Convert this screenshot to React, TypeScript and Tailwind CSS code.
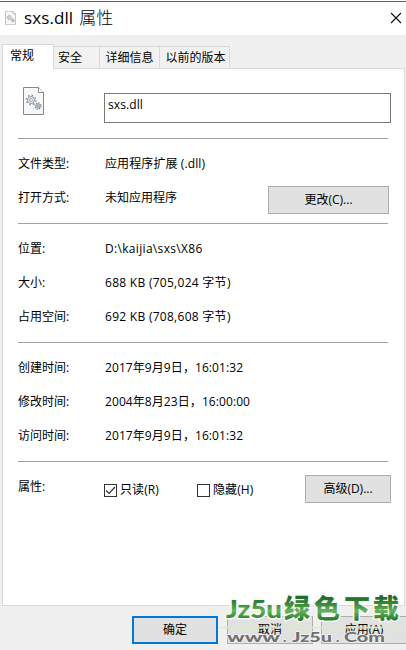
import type { ReactNode } from "react";

function GearPage({ className }: { className: string }) {
  return (
    <svg className={className} viewBox="0 0 21 28" fill="none">
      <path d="M.5.5h15l5 5v22H.5z" fill="#f8f8f8" stroke="#85898d" />
      <path d="M15.5.5v5h5" fill="#fff" stroke="#85898d" />
      <circle cx="8" cy="13" r="4.7" stroke="#929ba3" strokeWidth="1.5" strokeDasharray="1.7 1.99" />
      <circle cx="8" cy="13" r="3.5" fill="#e4e9ed" stroke="#8f9aa4" />
      <circle cx="8" cy="13" r="1.4" fill="#fff" stroke="#929ba3" strokeWidth=".8" />
      <circle cx="15" cy="19" r="3.1" stroke="#7f8992" strokeWidth="1.2" strokeDasharray="1.2 1.23" />
      <circle cx="15" cy="19" r="2.2" fill="#d5dce2" stroke="#7f8992" strokeWidth=".9" />
      <circle cx="15" cy="19" r=".8" fill="#77818a" />
    </svg>
  );
}

function Row({ label, children, spacing = "" }: { label: string; children: ReactNode; spacing?: string }) {
  return (
    <div className="flex h-[34px] items-center">
      <span className="w-[87px] shrink-0">{label}</span>
      <span className={spacing}>{children}</span>
    </div>
  );
}

function Check({ label, checked = false }: { label: string; checked?: boolean }) {
  return (
    <div className="flex items-center gap-[3px]">
      <span className="block size-[13px] border border-[#333] bg-white">
        {checked && (
          <svg viewBox="0 0 11 11" className="size-[11px]" fill="none">
            <path d="M1 5.5 4 8.5 10 2" stroke="#333" strokeWidth="1.2" />
          </svg>
        )}
      </span>
      <span className="tracking-[0.1px]">{label}</span>
    </div>
  );
}

const button = "flex items-center justify-center border border-[#adadad] bg-[#e1e1e1]";
const tab = "flex h-[22px] items-center justify-center border border-b-0 border-l-0 border-[#d9d9d9] bg-[#f2f2f2] pt-px";

export default function App() {
  return (
    <div className="relative flex h-[650px] w-[406px] flex-col overflow-hidden bg-[#f0f0f0] font-['Open_Sans','Noto_Sans_CJK_SC',sans-serif] text-[12px] leading-4 whitespace-nowrap text-black">
      <header className="flex h-[35px] items-center bg-white pl-[5px]">
        <GearPage className="h-[14px] w-[11px]" />
        <h1 className="ml-[8px] text-[17px] leading-6 font-light">
          <span className="mr-[1.5px] font-normal tracking-[0.1px]">sxs.dll</span> 属性
        </h1>
        <svg className="mr-[4px] ml-auto size-[12px]" viewBox="0 0 12 12" fill="none">
          <path d="m1 1 10 10M11 1 1 11" stroke="#111" strokeWidth="1.1" />
        </svg>
      </header>
      <div className="absolute top-px left-0 h-px w-full bg-[#1878b8]" />

      <nav className="flex h-[33px] items-end pl-[2px]">
        <div className="relative z-10 -mb-px flex h-[25px] w-[52px] justify-center border border-b-0 border-[#d9d9d9] bg-white pt-[3px] pr-[12px]">常规</div>
        <div className={`${tab} w-[46px] pr-[13px]`}>安全</div>
        <div className={`${tab} w-[60px]`}>详细信息</div>
        <div className={`${tab} w-[70px] pl-[2px]`}>以前的版本</div>
      </nav>

      <main className="mr-px ml-[2px] flex h-[538px] flex-col border border-[#d9d9d9] bg-white pr-[13px] pl-[15px]">
        <section className="flex h-[69px]">
          <GearPage className="mt-[18px] ml-[5px] h-[28px] w-[21px]" />
          <div className="mt-[24px] ml-[60px] flex h-[30px] w-[287px] shrink-0 items-start border border-[#7a7a7a] bg-white pt-[3px] pl-[3px] tracking-[0.1px]">sxs.dll</div>
        </section>
        <hr className="w-[370px] border-[#a0a0a0]" />

        <section className="flex h-[84px] pt-[8px]">
          <div>
            <Row label="文件类型:" spacing="tracking-[0.1px]">应用程序扩展 (.dll)</Row>
            <Row label="打开方式:">未知应用程序</Row>
          </div>
          <div className={`${button} mt-[39px] mr-[2px] ml-auto h-[28px] w-[121px] shrink-0`}>更改(C)...</div>
        </section>
        <hr className="w-[370px] border-[#a0a0a0]" />

        <section className="h-[118px] pt-[8px]">
          <Row label="位置:" spacing="tracking-[0.32px]">D:\kaijia\sxs\X86</Row>
          <Row label="大小:" spacing="tracking-[0.28px]">688 KB (705,024 字节)</Row>
          <Row label="占用空间:" spacing="tracking-[0.28px]">692 KB (708,608 字节)</Row>
        </section>
        <hr className="w-[370px] border-[#a0a0a0]" />

        <section className="h-[118px] pt-[8px]">
          <Row label="创建时间:" spacing="tracking-[0.08px]">2017年9月9日，16:01:32</Row>
          <Row label="修改时间:" spacing="tracking-[0.08px]">2004年8月23日，16:00:00</Row>
          <Row label="访问时间:" spacing="tracking-[0.08px]">2017年9月9日，16:01:32</Row>
        </section>
        <hr className="w-[370px] border-[#a0a0a0]" />

        <section className="flex pt-[12px]">
          <span className="mt-[5px] w-[86px]">属性:</span>
          <div className="mt-[8px] flex h-4 w-[93px]"><Check label="只读(R)" checked /></div>
          <div className="mt-[8px] flex h-4"><Check label="隐藏(H)" /></div>
          <div className={`${button} mt-px ml-auto h-[28px] w-[86px]`}>高级(D)...</div>
        </section>
      </main>

      <footer className="flex pt-[10px] pl-[132px]">
        <div className="flex h-[28px] w-[86px] shrink-0 items-center justify-center border-2 border-[#0078d7] bg-[#e1e1e1] pb-px">确定</div>
        <div className={`${button} ml-[9px] h-[28px] w-[86px] shrink-0`}>取消</div>
        <div className={`${button} ml-[8px] h-[28px] w-[86px] shrink-0`}>应用(A)</div>
      </footer>

      <svg className="absolute top-[590px] left-[215px] h-[60px] w-[191px]" viewBox="0 0 191 60">
        <defs>
          <linearGradient id="green" gradientUnits="userSpaceOnUse" x1="0" y1="7" x2="0" y2="30">
            <stop offset="0" stopColor="#1f6a26" />
            <stop offset=".35" stopColor="#3f8e40" />
            <stop offset=".6" stopColor="#64b45e" />
            <stop offset="1" stopColor="#257a2c" />
          </linearGradient>
        </defs>
        <path d="M5 37.5h182" stroke="#dcebc8" strokeWidth="2" strokeOpacity=".9" />
        <g fill="url(#green)" stroke="#f7f8f5" strokeWidth="3" strokeLinejoin="round" paintOrder="stroke">
          <text x="11" y="28" fontSize="24" fontWeight="900" textLength="56" lengthAdjust="spacingAndGlyphs" fontFamily="Lato, sans-serif">Jz5u</text>
          <text x="69 99 129 158" y="28" fontSize="26" fontWeight="900" fontFamily="'Noto Sans CJK SC', sans-serif">绿色下载</text>
        </g>
        <g fontSize="14" fontWeight="900" fill="#707070" stroke="#f3f3f3" strokeWidth="1.5" strokeLinejoin="round" paintOrder="stroke" fontFamily="Lato, sans-serif">
          <text x="12" y="52" textLength="53" lengthAdjust="spacingAndGlyphs">www</text>
          <text x="68" y="52">.</text>
          <text x="77" y="52" textLength="40" lengthAdjust="spacingAndGlyphs">Jz5u</text>
          <text x="121" y="52">.</text>
          <text x="129" y="52" textLength="41" lengthAdjust="spacingAndGlyphs">Com</text>
        </g>
      </svg>
    </div>
  );
}
